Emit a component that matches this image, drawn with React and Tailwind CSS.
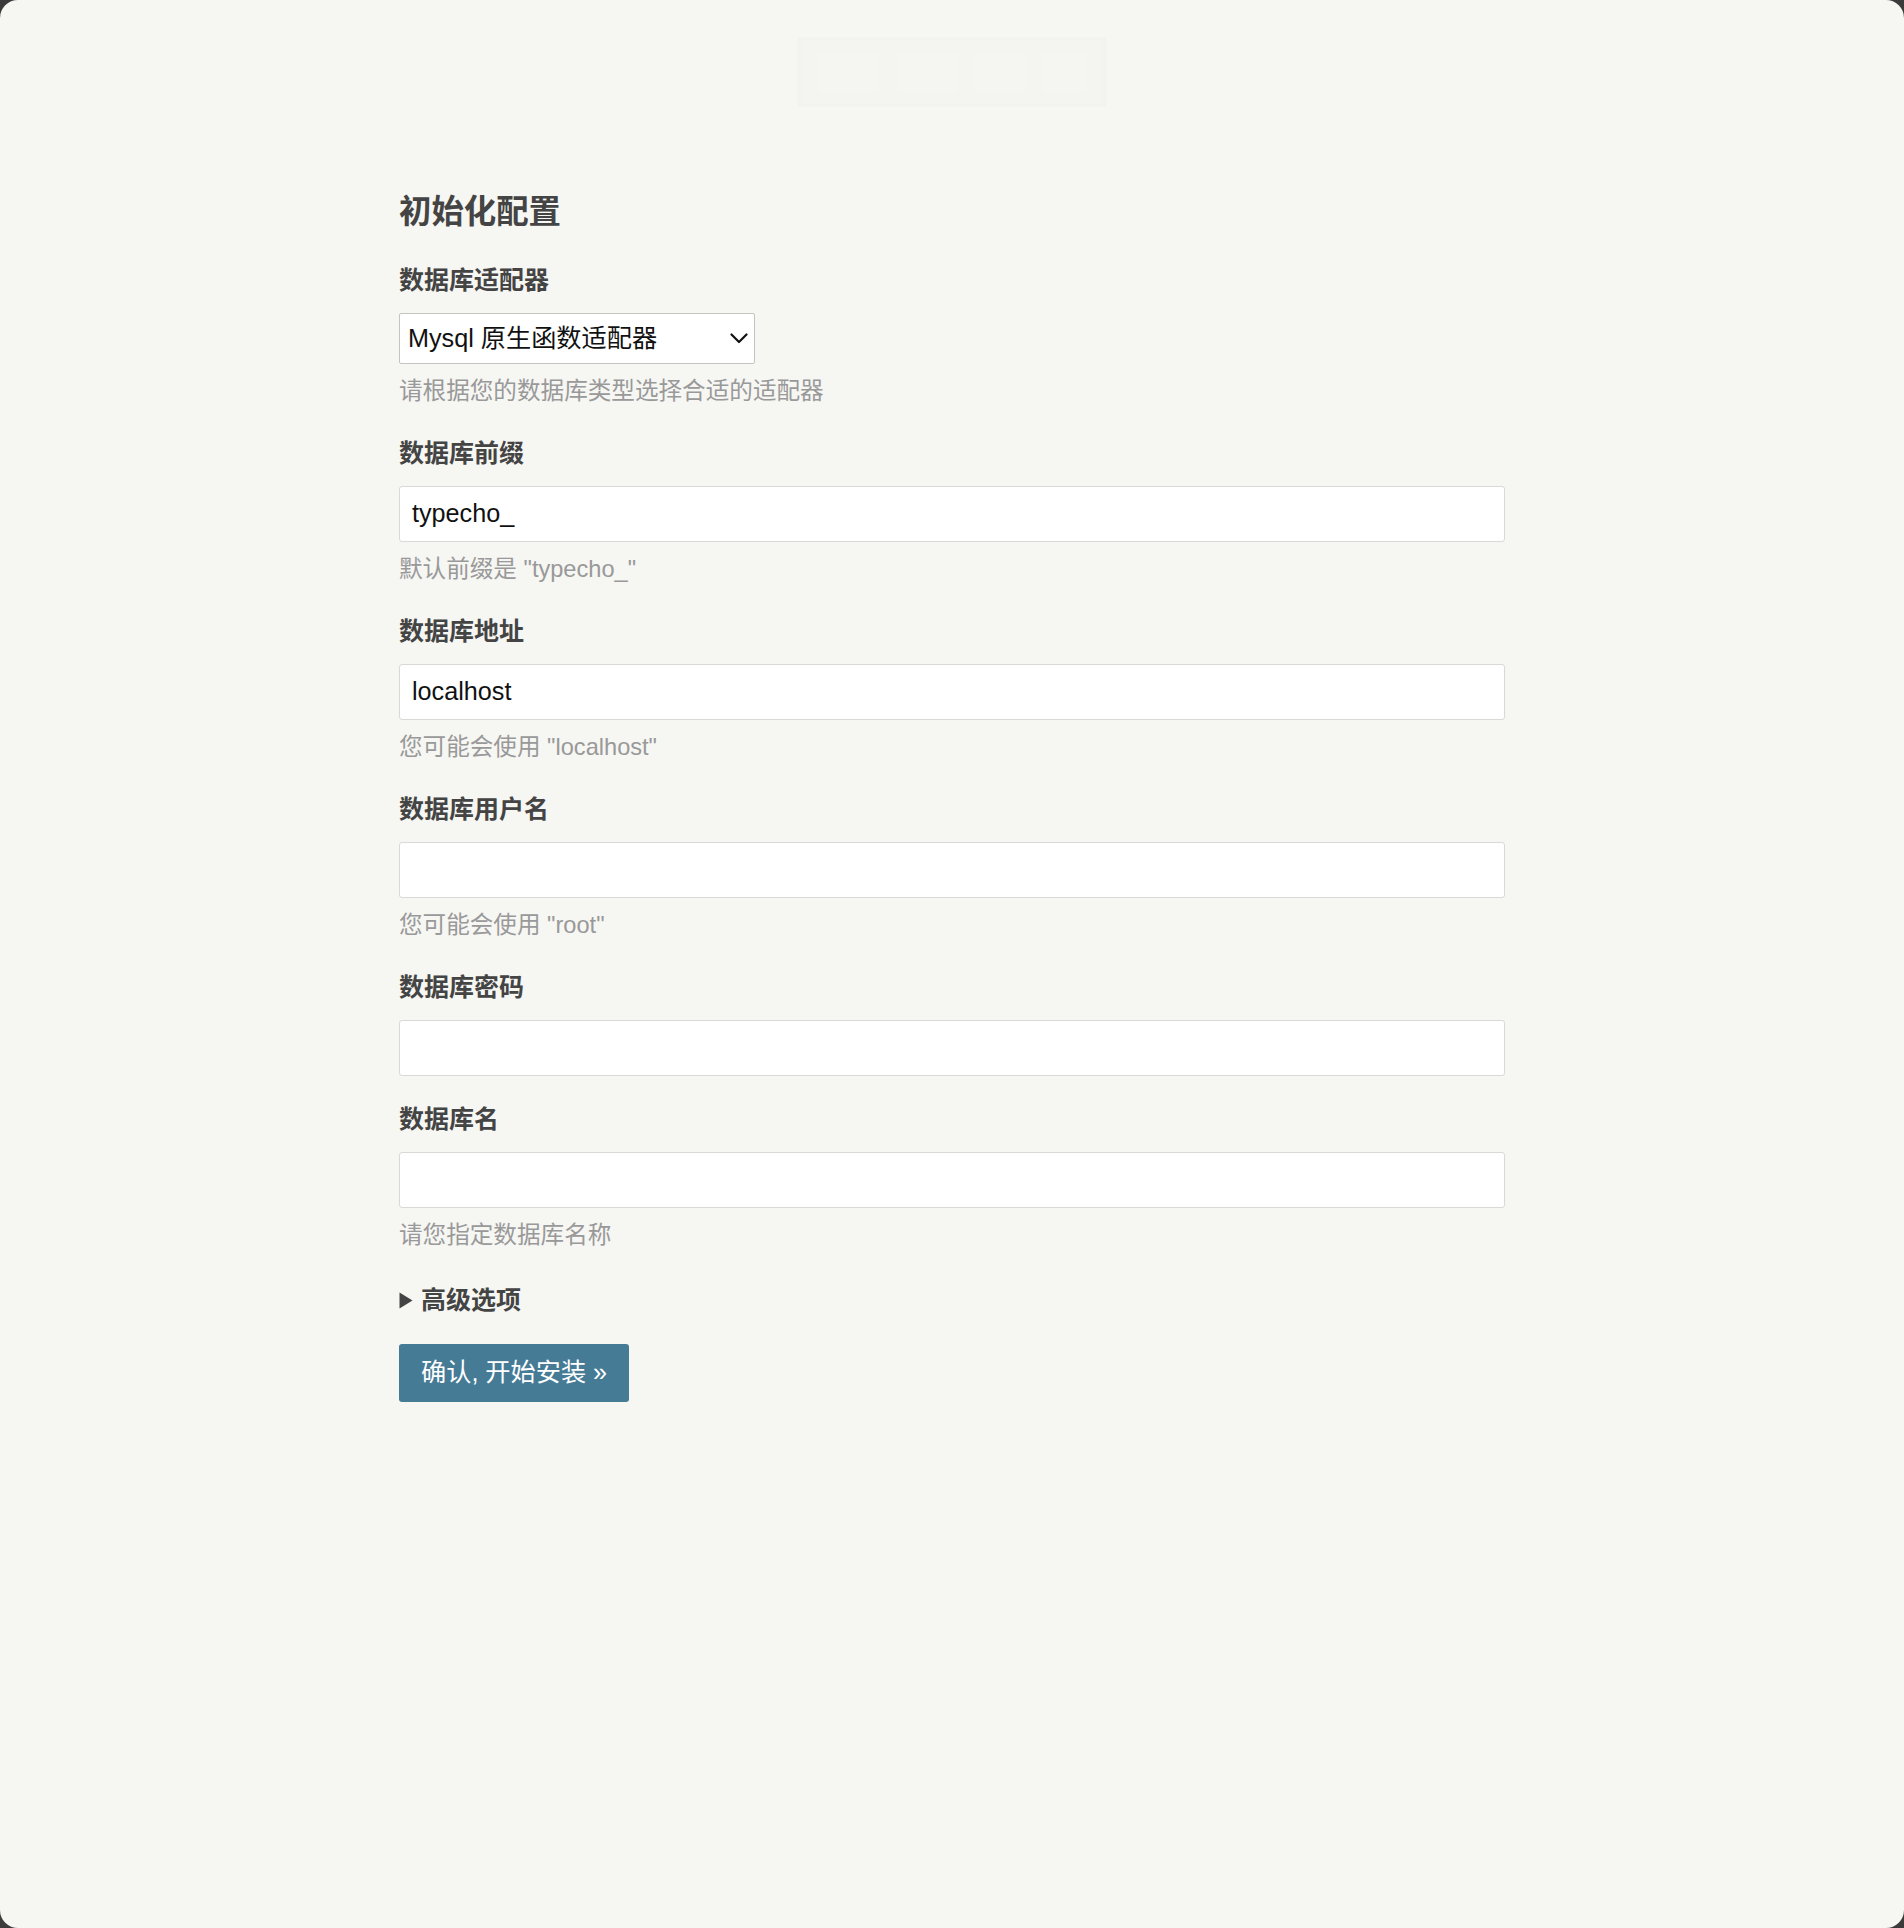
import React from 'react';

const font = { fontFamily: '"Liberation Sans", "Noto Sans CJK SC", sans-serif' };

const Logo = () => (
  <svg width="310" height="80" viewBox="0 0 310 80" className="opacity-50">
    <rect x="2" y="8" width="306" height="66" fill="#f3f3ee" stroke="#f0f0ea" strokeWidth="3" />
    <rect x="22" y="22" width="60" height="40" fill="#f5f5f1" />
    <rect x="100" y="22" width="60" height="40" fill="#f5f5f1" />
    <rect x="178" y="22" width="50" height="40" fill="#f5f5f1" />
    <rect x="246" y="22" width="44" height="40" fill="#f5f5f1" />
  </svg>
);

const Chevron = () => (
  <svg width="18" height="11" viewBox="0 0 18 11" fill="none">
    <path d="M1.5 1.5 L9 9 L16.5 1.5" stroke="#111" strokeWidth="2.2" strokeLinecap="round" strokeLinejoin="round" />
  </svg>
);

const Field = ({ label, value, help, last }) => (
  <li className={last ? 'mb-[28px]' : 'mb-[25px]'}>
    <label className="block text-[25px] leading-[37px] font-bold text-[#444] mb-[14px]">{label}</label>
    <div className="h-[56px] bg-white border border-[#d9d9d6] rounded-[3px] flex items-center px-[12px] text-[25.2px] text-[#111]">
      {value}
    </div>
    {help && <p className="mt-[9px] text-[23.6px] leading-[37px] text-[#999]">{help}</p>}
  </li>
);

export default function App() {
  return (
    <div className="w-[1904px] h-[1928px] bg-[#3b3b3b]" style={font}>
      <div className="w-full h-full bg-[#f6f6f3] rounded-[18px] overflow-hidden">
        {/* faint logo */}
        <div className="flex justify-center pt-[31px]">
          <Logo />
        </div>

        <div className="w-[1106px] mx-auto mt-[77px]">
          <h2 className="text-[32.4px] leading-[48px] font-bold text-[#444] mb-[26px]">初始化配置</h2>

          <ul>
            <li className="mb-[25px]">
              <label className="block text-[25px] leading-[37px] font-bold text-[#444] mb-[14px]">数据库适配器</label>
              <div className="w-[356px] h-[51px] bg-white border border-[#c4c4c0] rounded-[2px] flex items-center justify-between pl-[8px] pr-[6px] text-[25.2px] text-[#111]">
                <span>Mysql 原生函数适配器</span>
                <Chevron />
              </div>
              <p className="mt-[9px] text-[23.6px] leading-[37px] text-[#999]">请根据您的数据库类型选择合适的适配器</p>
            </li>

            <Field label="数据库前缀" value="typecho_" help={'默认前缀是 "typecho_"'} />
            <Field label="数据库地址" value="localhost" help={'您可能会使用 "localhost"'} />
            <Field label="数据库用户名" value="" help={'您可能会使用 "root"'} />
            <Field label="数据库密码" value="" />
            <Field label="数据库名" value="" help="请您指定数据库名称" last />

            <li className="mb-[25px] flex items-center h-[37px] text-[25px] font-bold text-[#444]">
              <svg width="14" height="17" viewBox="0 0 14 17" className="mr-[8px]">
                <path d="M0.5 0.5 L13.5 8.5 L0.5 16.5 Z" fill="#444" />
              </svg>
              高级选项
            </li>
          </ul>

          <button className="h-[58px] px-[22px] bg-[#467b96] text-white text-[25.2px] rounded-[3px]">
            确认, 开始安装 »
          </button>
        </div>
      </div>
    </div>
  );
}
